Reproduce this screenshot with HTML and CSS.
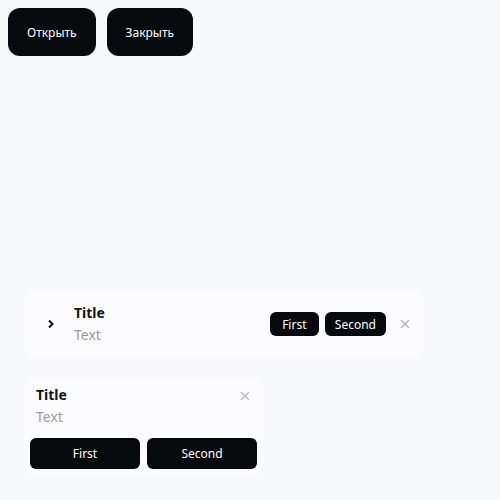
FILE: index.html
```html
<!DOCTYPE html>
<html lang="ru">
<head>
<meta charset="utf-8">
<link rel="stylesheet" href="styles.css">
</head>
<body>
<div class="top-actions">
  <button class="big-btn">Открыть</button>
  <button class="big-btn">Закрыть</button>
</div>
<div class="stack">
  <div class="card card-row">
    <div class="chev">
      <svg width="8" height="10" viewBox="0 0 8 10"><path d="M2 1.5 L5.5 5 L2 8.5" fill="none" stroke="#111" stroke-width="2"/></svg>
    </div>
    <div class="texts">
      <div class="title">Title</div>
      <div class="text">Text</div>
    </div>
    <div class="tags">
      <button class="tag">First</button>
      <button class="tag">Second</button>
    </div>
    <div class="close">
      <svg width="10" height="10" viewBox="0 0 10 10"><path d="M1 1 L9 9 M9 1 L1 9" stroke="#b8b9bc" stroke-width="1.6"/></svg>
    </div>
  </div>
  <div class="card card-col">
    <div class="col-head">
      <div class="texts">
        <div class="title">Title</div>
        <div class="text">Text</div>
      </div>
      <div class="close close-col">
        <svg width="10" height="10" viewBox="0 0 10 10"><path d="M1 1 L9 9 M9 1 L1 9" stroke="#bdbec1" stroke-width="1.6"/></svg>
      </div>
    </div>
    <div class="col-actions">
      <button class="act">First</button>
      <button class="act">Second</button>
    </div>
  </div>
</div>
</body>
</html>
```
FILE: styles.css
```css
html, body { margin: 0; padding: 0; }
body {
  background: #f8f9fb;
  font-family: "Noto Sans", "Open Sans", sans-serif;
  width: 500px;
  height: 500px;
}
button { font-family: inherit; border: none; cursor: pointer; }
.top-actions {
  display: flex;
  gap: 11px;
  padding: 8px 0 0 8px;
}
.big-btn {
  background: #070a0d;
  color: #ffffff;
  font-size: 12px;
  height: 48px;
  padding: 0 19px;
  border-radius: 12px;
}
.stack {
  margin: 233px 0 0 24px;
  display: flex;
  flex-direction: column;
  gap: 18px;
  align-items: flex-start;
}
.card {
  background: #fcfcfe;
  border-radius: 12px;
}
.card-row {
  width: 400px;
  height: 70px;
  box-sizing: border-box;
  display: flex;
  align-items: center;
  padding: 0 14px 0 22px;
}
.chev { width: 10px; display: flex; justify-content: center; margin-right: 18px; }
.chev svg { display: block; }
.texts { display: flex; flex-direction: column; }
.title { font-size: 14px; font-weight: 700; color: #141414; line-height: 22px; }
.text { font-size: 14px; color: #999a9c; line-height: 22px; }
.card-row .texts { flex: 1; }
.tags { display: flex; gap: 6px; }
.tag {
  background: #070a0d;
  color: #fff;
  font-size: 12px;
  height: 24px;
  min-width: 49px;
  padding: 0 10px;
  border-radius: 6px;
}
.close { width: 10px; height: 10px; margin-left: 14px; display: flex; }
.close svg { display: block; }
.card-col {
  width: 239px;
  box-sizing: border-box;
  padding: 6px 6px 6px;
}
.col-head {
  display: flex;
  justify-content: space-between;
  align-items: flex-start;
  padding: 1px 7px 0 6px;
}
.close-col { margin-top: 7px; }
.col-actions {
  display: flex;
  gap: 7px;
  margin-top: 10px;
}
.act {
  flex: 1;
  background: #070a0d;
  color: #fff;
  font-size: 12px;
  height: 31px;
  border-radius: 6px;
}
```
